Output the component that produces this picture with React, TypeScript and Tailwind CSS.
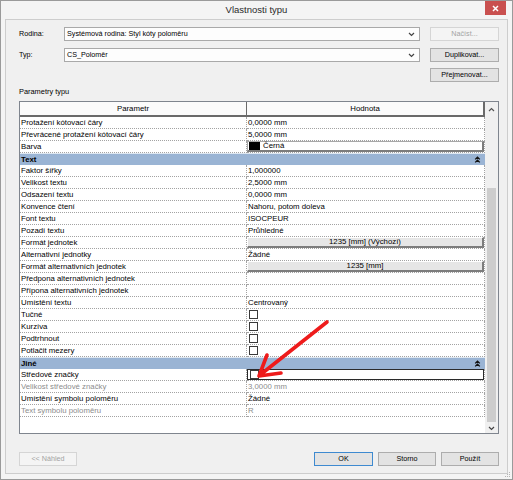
import React from 'react';

type Kind = 'text' | 'button' | 'check' | 'color' | 'empty';

type Row =
  | { group: string }
  | { name: string; value?: string; kind?: Kind; disabled?: boolean; focus?: boolean };

const rows: Row[] = [
  { name: 'Protažení kótovací čáry', value: '0,0000 mm' },
  { name: 'Převrácené protažení kótovací čáry', value: '5,0000 mm' },
  { name: 'Barva', value: 'Černá', kind: 'color' },
  { group: 'Text' },
  { name: 'Faktor šířky', value: '1,000000' },
  { name: 'Velikost textu', value: '2,5000 mm' },
  { name: 'Odsazení textu', value: '0,0000 mm' },
  { name: 'Konvence čtení', value: 'Nahoru, potom doleva' },
  { name: 'Font textu', value: 'ISOCPEUR' },
  { name: 'Pozadí textu', value: 'Průhledné' },
  { name: 'Formát jednotek', value: '1235 [mm] (Výchozí)', kind: 'button' },
  { name: 'Alternativní jednotky', value: 'Žádné' },
  { name: 'Formát alternativních jednotek', value: '1235 [mm]', kind: 'button' },
  { name: 'Předpona alternativních jednotek', kind: 'empty' },
  { name: 'Přípona alternativních jednotek', kind: 'empty' },
  { name: 'Umístění textu', value: 'Centrovaný' },
  { name: 'Tučné', kind: 'check' },
  { name: 'Kurzíva', kind: 'check' },
  { name: 'Podtrhnout', kind: 'check' },
  { name: 'Potlačit mezery', kind: 'check' },
  { group: 'Jiné' },
  { name: 'Středové značky', kind: 'check', focus: true },
  { name: 'Velikost středové značky', value: '3,0000 mm', disabled: true },
  { name: 'Umístění symbolu poloměru', value: 'Žádné' },
  { name: 'Text symbolu poloměru', value: 'R', disabled: true },
];

function ChevronDown() {
  return (
    <svg width="7" height="5" viewBox="0 0 7 5" className="shrink-0">
      <path d="M1 1 L3.5 3.5 L6 1" fill="none" stroke="#444" strokeWidth="1.2" />
    </svg>
  );
}

function DoubleUp() {
  return (
    <svg width="7" height="7" viewBox="0 0 7 7">
      <path d="M1.2 3.4 L3.5 1.2 L5.8 3.4 M1.2 6.4 L3.5 4.2 L5.8 6.4" fill="none" stroke="#111" strokeWidth="1.3" />
    </svg>
  );
}

function Combo({ text }: { text: string }) {
  return (
    <div className="h-[14px] bg-[#fdfdfd] border border-[#a9a9a9] flex items-center justify-between pl-[2px] pr-[4px]">
      <span className="text-[7.2px] leading-none">{text}</span>
      <ChevronDown />
    </div>
  );
}

function Btn({ label, disabled, primary }: { label: string; disabled?: boolean; primary?: boolean }) {
  return (
    <div
      className={
        'h-[14px] flex items-center justify-center text-[7.2px] leading-none border ' +
        (disabled
          ? 'bg-[#f4f4f4] border-[#d5d5d5] text-[#a3a3a3]'
          : primary
          ? 'bg-[#e3e3e3] border-[#3e8ad0] text-black'
          : 'bg-[#e3e3e3] border-[#adadad] text-black')
      }
    >
      {label}
    </div>
  );
}

function Value({ r }: { r: Extract<Row, { name: string }> }) {
  const kind = r.kind ?? 'text';
  if (kind === 'color') {
    return (
      <div className="h-full flex items-center gap-[3px] pl-[1px] border border-[#a8a8a8] border-r-2 border-b-2 border-r-[#7c7c7c] border-b-[#7c7c7c] bg-white">
        <span className="w-[11px] h-[8px] bg-black" />
        <span>{r.value}</span>
      </div>
    );
  }
  if (kind === 'button') {
    return (
      <div className="h-full flex items-center justify-center bg-[#e6e6e6] border border-white border-r-2 border-b-2 border-r-[#7c7c7c] border-b-[#7c7c7c]">
        {r.value}
      </div>
    );
  }
  if (kind === 'check') {
    return (
      <div className={'h-full flex items-center pl-[2px] ' + (r.focus ? 'border border-[#2b2b2b]' : '')}>
        <span className="w-[9px] h-[9px] border border-[#3a3a3a] bg-white" />
      </div>
    );
  }
  if (kind === 'empty') return <div className="h-full" />;
  return (
    <div className={'h-full flex items-center pl-[1px] ' + (r.disabled ? 'text-[#8d8d8d]' : '')}>{r.value}</div>
  );
}

export default function App() {
  return (
    <div className="relative w-[513px] h-[480px] flex flex-col bg-[#f4f4f4] border border-[#9a9a9a] font-['Liberation_Sans',Arial,sans-serif] text-black overflow-hidden">
      {/* title bar */}
      <div className="h-[18px] grid grid-cols-[26px_1fr_26px] items-start">
        <div />
        <div className="text-center text-[9.5px] leading-[18px] text-[#2a2a2a]">Vlastnosti typu</div>
        <div className="h-[14px] w-[21px] bg-[#c9504f] flex items-center justify-center -ml-[1px]">
          <svg width="7" height="7" viewBox="0 0 7 7">
            <path d="M1 1 L6 6 M6 1 L1 6" stroke="white" strokeWidth="1.5" />
          </svg>
        </div>
      </div>

      {/* content */}
      <div className="flex-1 mx-[4px] mb-[5px] bg-[#f0f0f0] border border-[#cdcdcd] pl-[13px] pr-[8px] pt-[7px] pb-[7px] flex flex-col">
        <div className="flex">
          <div className="w-[45px] h-[14px] flex items-center text-[7.2px]">Rodina:</div>
          <div className="w-[356px]">
            <Combo text="Systémová rodina: Styl kóty poloměru" />
          </div>
          <div className="ml-[10px] w-[69px]">
            <Btn label="Načíst..." disabled />
          </div>
        </div>
        <div className="mt-[7px] flex">
          <div className="w-[45px] h-[14px] flex items-center text-[7.2px]">Typ:</div>
          <div className="w-[356px]">
            <Combo text="CS_Poloměr" />
          </div>
          <div className="ml-[10px] w-[69px]">
            <Btn label="Duplikovat..." />
          </div>
        </div>
        <div className="mt-[6px] flex justify-end">
          <div className="w-[69px]">
            <Btn label="Přejmenovat..." />
          </div>
        </div>
        <div className="mt-[5px] h-[10px] text-[7.4px] leading-[10px]">Parametry typu</div>

        {/* property grid */}
        <div className="mt-[4px] h-[333px] border border-[#7f858e] bg-white flex text-[7.8px] leading-none">
          <div className="flex-1 flex flex-col">
            <div className="h-[15px] grid grid-cols-[227px_238px]">
              <div className="flex items-center justify-center bg-[#fbfbfb] border-r border-b-2 border-[#6a6a6a]">Parametr</div>
              <div className="flex items-center justify-center bg-[#fbfbfb] border-r-2 border-b-2 border-[#6a6a6a]">Hodnota</div>
            </div>
            {rows.map((r, i) =>
              'group' in r ? (
                <div key={i} className="h-[12px] bg-[#9ab4d4] border-t border-[#dfe8f2] flex items-center justify-between pl-[1px] pr-[4px] font-bold">
                  <span>{r.group}</span>
                  <DoubleUp />
                </div>
              ) : (
                <div key={i} className="h-[12px] grid grid-cols-[227px_238px]">
                  <div
                    className={
                      'flex items-center pl-[1px] border-r border-b border-dotted border-[#a3a3a3] ' +
                      (r.disabled ? 'text-[#8d8d8d]' : '')
                    }
                  >
                    {r.name}
                  </div>
                  <div className="border-r border-b border-dotted border-[#a3a3a3]">
                    <Value r={r} />
                  </div>
                </div>
              )
            )}
            <div className="flex-1" />
          </div>
          {/* scrollbar */}
          <div className="w-[13px] bg-[#f0f0f0] flex flex-col">
            <div className="h-[15px] flex items-center justify-center">
              <svg width="7" height="5" viewBox="0 0 7 5">
                <path d="M1 4 L3.5 1.5 L6 4" fill="none" stroke="#555" strokeWidth="1.2" />
              </svg>
            </div>
            <div className="flex-1 pt-[71px] pl-[2px]">
              <div className="w-[9px] h-[234px] bg-[#cdcdcd]" />
            </div>
            <div className="h-[10px] flex items-center justify-center">
              <ChevronDown />
            </div>
          </div>
        </div>

        {/* bottom buttons */}
        <div className="mt-[18px] flex justify-between">
          <div className="w-[58px]">
            <Btn label="<< Náhled" disabled />
          </div>
          <div className="flex gap-[5px]">
            <div className="w-[59px]">
              <Btn label="OK" primary />
            </div>
            <div className="w-[58px]">
              <Btn label="Storno" />
            </div>
            <div className="w-[58px]">
              <Btn label="Použít" />
            </div>
          </div>
        </div>
      </div>

      {/* resize grip */}
      <svg className="absolute right-[1px] bottom-[1px]" width="8" height="8" viewBox="0 0 8 8">
        <g fill="#b5b5b5">
          <rect x="6" y="2" width="1" height="1" />
          <rect x="4" y="4" width="1" height="1" />
          <rect x="6" y="4" width="1" height="1" />
          <rect x="2" y="6" width="1" height="1" />
          <rect x="4" y="6" width="1" height="1" />
          <rect x="6" y="6" width="1" height="1" />
        </g>
      </svg>

      {/* red annotation arrow */}
      <svg className="absolute left-0 top-0 pointer-events-none" width="513" height="480" viewBox="0 0 513 480">
        <path
          d="M326 321 L259 374 M266 354 L258 375 L280 372"
          fill="none"
          stroke="#ee1b1b"
          strokeWidth="3.6"
          strokeLinecap="round"
          strokeLinejoin="round"
        />
      </svg>
    </div>
  );
}
